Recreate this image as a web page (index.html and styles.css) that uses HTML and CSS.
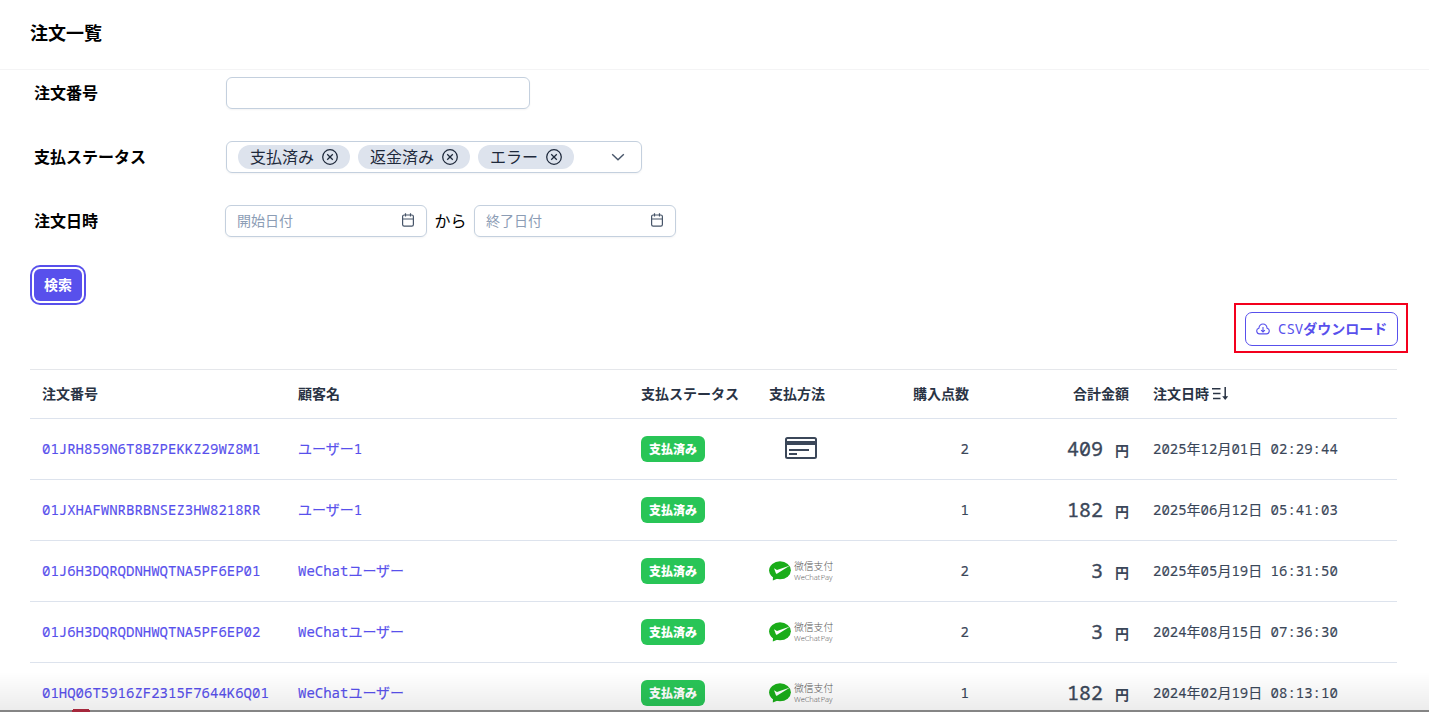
FILE: index.html
```html
<!DOCTYPE html>
<html lang="ja">
<head>
<meta charset="utf-8">
<title>注文一覧</title>
<link rel="stylesheet" href="styles.css">
</head>
<body>
<svg class="defs" width="0" height="0">
  <symbol id="clear" viewBox="0 0 16 16"><circle cx="8" cy="8" r="7.3"/><path d="M5.2 5.2l5.6 5.6M10.8 5.2l-5.6 5.6"/></symbol>
  <symbol id="calendar" viewBox="0 0 14 14"><rect x="1.6" y="2" width="10.8" height="11.2" rx="1.6"/><path d="M1.6 6h10.8M4.5 .2v3.3M9.5 .2v3.3"/></symbol>
  <symbol id="wechat" viewBox="0 0 22 20"><ellipse cx="11" cy="9.3" rx="10.9" ry="9" fill="#1aad19"/><path d="M4 15l-.2 4.6 5-2.2z" fill="#1aad19"/><path d="M5 7.2l3 1.9L21 4.4 8.3 12.6c-.6.4-1.1.2-1.4-.4z" fill="#fff"/></symbol>
</svg>
<header class="page-header"><h1>注文一覧</h1></header>
<main>
  <form class="filters">
    <div class="field"><label>注文番号</label><div class="input order-input"></div></div>
    <div class="field"><label>支払ステータス</label>
      <div class="input select">
        <span class="chip"><span class="text">支払済み</span><svg class="icon"><use href="#clear"/></svg></span>
        <span class="chip"><span class="text">返金済み</span><svg class="icon"><use href="#clear"/></svg></span>
        <span class="chip"><span class="text">エラー</span><svg class="icon"><use href="#clear"/></svg></span>
        <svg class="chevron" viewBox="0 0 14 8"><path d="M1.2 1.2L7 6.8l5.8-5.6"/></svg>
      </div>
    </div>
    <div class="field dates"><label>注文日時</label>
      <div class="input date"><span class="text">開始日付</span><svg class="cal"><use href="#calendar"/></svg></div>
      <span class="from">から</span>
      <div class="input date"><span class="text">終了日付</span><svg class="cal"><use href="#calendar"/></svg></div>
    </div>
    <button class="search" type="button">検索</button>
  </form>
  <div class="toolbar">
    <div class="highlight">
      <button class="download" type="button"><svg viewBox="0 0 14 12"><path d="M3.8 10.9A2.9 2.9 0 0 1 2.9 5.2C3.3 2.6 4.8 1 7 1s3.7 1.6 4.1 4.2a2.9 2.9 0 0 1-.9 5.7zM7 4v5M5.1 7.2L7 9l1.9-1.8"/></svg><span class="text"><span class="latin">CSV</span>ダウンロード</span></button>
    </div>
  </div>
  <table class="orders">
    <colgroup><col class="c-id"><col class="c-name"><col class="c-status"><col class="c-method"><col class="c-qty"><col class="c-total"><col class="c-date"></colgroup>
    <thead><tr><th>注文番号</th><th>顧客名</th><th>支払ステータス</th><th>支払方法</th><th class="num">購入点数</th><th class="num">合計金額</th><th><span class="sort">注文日時<svg viewBox="0 0 20 16"><path d="M3 3.8h8.5M4 8.6h7.5M4 13.4h7.5M16.2 2v11"/><path class="head" d="M13.2 11.2h6l-3 3.8z"/></svg></span></th></tr></thead>
    <tbody>
      <tr><td class="link">01JRH859N6T8BZPEKKZ29WZ8M1</td><td class="link">ユーザー1</td><td><span class="badge">支払済み</span></td><td class="method"><svg class="card" viewBox="0 0 32 22"><rect x="1" y="1" width="30" height="20" rx="1.5"/><path class="band" d="M1 6h30"/><path d="M4 13h20M4 17h8"/></svg></td><td class="num">2</td><td class="num"><span class="amount">409</span><span class="yen">円</span></td><td>2025年12月01日 02:29:44</td></tr>
      <tr><td class="link">01JXHAFWNRBRBNSEZ3HW8218RR</td><td class="link">ユーザー1</td><td><span class="badge">支払済み</span></td><td class="method"></td><td class="num">1</td><td class="num"><span class="amount">182</span><span class="yen">円</span></td><td>2025年06月12日 05:41:03</td></tr>
      <tr><td class="link">01J6H3DQRQDNHWQTNA5PF6EP01</td><td class="link">WeChatユーザー</td><td><span class="badge">支払済み</span></td><td class="method"><span class="wechat"><svg><use href="#wechat"/></svg><span class="wechat-text"><span class="zh">微信支付</span><span class="en">WeChat Pay</span></span></span></td><td class="num">2</td><td class="num"><span class="amount">3</span><span class="yen">円</span></td><td>2025年05月19日 16:31:50</td></tr>
      <tr><td class="link">01J6H3DQRQDNHWQTNA5PF6EP02</td><td class="link">WeChatユーザー</td><td><span class="badge">支払済み</span></td><td class="method"><span class="wechat"><svg><use href="#wechat"/></svg><span class="wechat-text"><span class="zh">微信支付</span><span class="en">WeChat Pay</span></span></span></td><td class="num">2</td><td class="num"><span class="amount">3</span><span class="yen">円</span></td><td>2024年08月15日 07:36:30</td></tr>
      <tr><td class="link">01HQ06T5916ZF2315F7644K6Q01</td><td class="link">WeChatユーザー</td><td><span class="badge">支払済み</span></td><td class="method"><span class="wechat"><svg><use href="#wechat"/></svg><span class="wechat-text"><span class="zh">微信支付</span><span class="en">WeChat Pay</span></span></span></td><td class="num">1</td><td class="num"><span class="amount">182</span><span class="yen">円</span></td><td>2024年02月19日 08:13:10</td></tr>
    </tbody>
  </table>
</main>
<div class="window-shade"></div>
</body>
</html>
```
FILE: styles.css
```css
* { box-sizing: border-box; }
body { margin: 0; height: 712px; overflow: hidden; position: relative; background: #fff; color: #000; font: 14px/20px "Noto Sans Mono", "DejaVu Sans Mono", "Noto Sans CJK JP", monospace; }
svg { display: block; fill: none; }
.defs { position: absolute; }
button { font: inherit; }
.page-header { height: 70px; padding: 19px 30px; border-bottom: 1px solid #f4f4f5; }
h1 { margin: 0; font: 700 18px/26px "Noto Sans CJK JP", sans-serif; }
main { padding: 7px 31px 0 30px; }
.filters { font-family: "Noto Sans CJK JP", sans-serif; }
.field { display: flex; align-items: center; height: 32px; margin-bottom: 32px; padding-left: 4px; font-size: 16px; }
.field label { width: 192px; padding-bottom: 2px; font-weight: 700; }
.dates label { width: 191px; }
.text { padding-bottom: 2px; }
.input { display: flex; align-items: center; height: 32px; border: 1px solid #c4d0de; border-radius: 6px; box-shadow: 0 1px 2px rgba(15, 23, 42, .05); }
.order-input { width: 304px; }
.select { width: 416px; padding-left: 11px; gap: 8px; }
.chip { display: flex; align-items: center; gap: 8px; height: 24px; padding: 0 12px; border-radius: 12px; background: #dde3ed; color: #1e293b; }
.icon { width: 16px; height: 16px; stroke: #1e293b; stroke-width: 1.25; }
.chevron { width: 14px; height: 8px; margin-left: auto; margin-right: 16px; stroke: #475569; stroke-width: 1.4; }
.date { width: 202px; padding: 0 11px; justify-content: space-between; font-size: 14px; color: #8c9db5; }
.cal { width: 14px; height: 14px; margin-bottom: 2px; stroke: #475569; stroke-width: 1.2; }
.from { width: 47px; padding-bottom: 2px; text-align: center; }
.search { display: block; width: 48px; height: 32px; margin: 0 0 0 4px; padding: 0 0 2px; border: 0; border-radius: 6px; background: #5850ec; color: #fff; font: 700 14px/20px "Noto Sans CJK JP", sans-serif; box-shadow: 0 0 0 2px #fff, 0 0 0 4px #5850ec; }
.toolbar { display: flex; justify-content: flex-end; height: 66px; margin: 2px -10px 0 0; }
.highlight { width: 174px; height: 50px; padding: 7px 8px 7px 9px; border: 2px solid #f3001d; }
.download { display: flex; align-items: center; width: 153px; height: 34px; padding: 0 0 0 10px; border: 1px solid #5850ec; border-radius: 7px; background: #fff; color: #5850ec; font: 700 14px/20px "Noto Sans CJK JP", sans-serif; white-space: nowrap; }
.download svg { width: 14px; height: 12px; margin-right: 8px; stroke: #5850ec; stroke-width: 1.1; }
.latin { font: 400 14px/20px "Noto Sans Mono", "DejaVu Sans Mono", monospace; }
.orders { width: 1367px; table-layout: fixed; border-collapse: separate; border-spacing: 0; border-top: 1px solid #e5e7eb; color: #3b4759; -webkit-text-stroke: .15px; }
.c-id { width: 256px; } .c-name { width: 343px; } .c-status { width: 128px; } .c-method { width: 88px; } .c-qty { width: 136px; } .c-total { width: 160px; }
th, td { padding: 0 12px; border-bottom: 1px solid #dde3ed; text-align: left; white-space: nowrap; vertical-align: middle; }
th { height: 49px; padding-bottom: 2px; color: #293344; font: 700 14px/20px "Noto Sans CJK JP", sans-serif; -webkit-text-stroke: 0; }
td { height: 61px; }
tbody tr:last-child td { border-bottom-color: transparent; }
.num { text-align: right; }
.link { color: #5850ec; }
.sort { display: flex; align-items: center; }
.sort svg { width: 20px; height: 16px; stroke: #293344; stroke-width: 1.5; }
.sort .head { fill: #293344; stroke: none; }
.badge { display: flex; align-items: center; justify-content: center; width: 64px; height: 26px; padding-bottom: 1px; border-radius: 6px; background: #29c557; color: #fff; font: 900 12px/17px "Noto Sans CJK JP", sans-serif; -webkit-text-stroke: 0; }
.card { width: 32px; height: 22px; margin: -2px auto 0; stroke: #3b4759; stroke-width: 2; }
.card .band { stroke-width: 4; }
.wechat { display: flex; align-items: center; gap: 3px; width: 65px; height: 20px; }
.wechat svg { width: 22px; height: 20px; flex: none; }
.wechat-text { color: #555; -webkit-text-stroke: 0; }
.zh { display: block; height: 10px; font: 300 9.8px/9px "Noto Sans CJK SC", sans-serif; }
.en { display: block; height: 9px; font: 300 7.6px/10px "Open Sans", sans-serif; letter-spacing: -.1px; word-spacing: -1.2px; }
.amount { font-size: 20px; line-height: 24px; -webkit-text-stroke: .35px #3b4759; }
.yen { display: inline-block; margin-left: 12px; padding-bottom: 1px; font: 700 14px/20px "Noto Sans CJK JP", sans-serif; vertical-align: -2px; -webkit-text-stroke: 0; line-height: 16px; vertical-align: 0; }
.window-shade { position: absolute; left: 0; right: 0; bottom: 0; height: 40px; border-bottom: 2px solid #858585; background: linear-gradient(#a5283c, #a5283c) 73px 37px / 16px 1px no-repeat, linear-gradient(rgba(0, 0, 0, 0), rgba(0, 0, 0, .075)); }
.window-shade::after { content: ""; position: absolute; left: 72px; bottom: -2px; width: 18px; height: 2px; background: #a5283c; }
```
